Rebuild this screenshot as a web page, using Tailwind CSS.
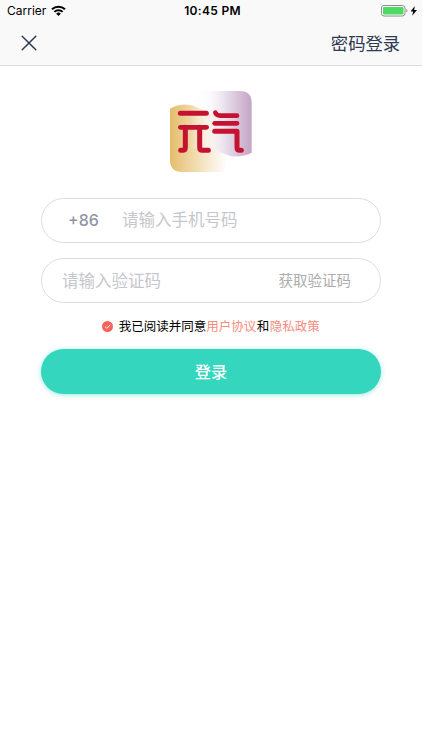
<!DOCTYPE html>
<html lang="zh-CN">
<head>
  <meta charset="UTF-8" />
  <meta name="viewport" content="width=device-width, initial-scale=1" />
  <title>登录</title>
  <script src="https://cdn.jsdelivr.net/npm/@tailwindcss/browser@4"></script>
</head>
<body class="bg-white h-screen overflow-hidden font-['Inter','Noto_Sans_CJK_SC',sans-serif]">
  <header class="h-[66px] bg-[#f9f9f9] border-b border-[#dcdcdc]">
    <!-- status bar -->
    <div class="h-[22px] grid grid-cols-3 items-center pl-[7px] pr-1 text-black">
      <div class="flex items-center gap-[5px] text-[12px] leading-none">
        <span>Carrier</span>
        <svg class="w-[15px] h-[11px] -mt-px" viewBox="0 0 15 11" fill="none" stroke="#000" stroke-width="2">
          <path d="M1 4.3a9.3 9.3 0 0 1 13 0" />
          <path d="M3.4 6.9a5.9 5.9 0 0 1 8.2 0" />
          <path d="M7.5 11L5.2 8.7a3.3 3.3 0 0 1 4.6 0z" fill="#000" stroke="none" />
        </svg>
      </div>
      <span class="text-center text-[12px] leading-none font-semibold tracking-[0.3px]">10:45 PM</span>
      <div class="flex items-center justify-end">
        <svg class="w-[37px] h-[12px]" viewBox="0 0 37 12">
          <rect x=".5" y=".5" width="23.5" height="10.5" rx="2.6" fill="#fff" stroke="#8d8d8d" />
          <rect x="2" y="2" width="20.5" height="7.5" rx="1.2" fill="#4cd964" />
          <path d="M25.3 4v3.6q1.2-.6 1.2-1.8t-1.2-1.8z" fill="#8d8d8d" />
          <path d="M33.8 1L29.6 6.4h2.6L31.2 10.8l4.8-5.9h-2.8z" fill="#000" />
        </svg>
      </div>
    </div>
    <!-- nav bar -->
    <div class="h-[43px] flex items-center justify-between pl-[21px] pr-[22px] text-[#2d3a52]">
      <svg class="w-4 h-4 -mt-[2px]" viewBox="0 0 16 16" fill="none" stroke="currentColor" stroke-width="1.5" stroke-linecap="round">
        <path d="M1.2 1.2l13.6 13.6M14.8 1.2L1.2 14.8" />
      </svg>
      <a class="text-[17.3px] leading-none">密码登录</a>
    </div>
  </header>

  <main class="px-[41px] pt-[18px]">
    <svg class="block mx-auto w-[102px] h-[96px]" viewBox="0 0 306 288">
      <defs>
        <linearGradient id="gold" x1="0" x2="1">
          <stop offset="0" stop-color="#e5bd6c" />
          <stop offset=".45" stop-color="#f1dcb0" />
          <stop offset="1" stop-color="#fff" />
        </linearGradient>
        <linearGradient id="plum" x1="0" x2="1">
          <stop offset="0" stop-color="#fff" stop-opacity="0" />
          <stop offset=".3" stop-color="#fbf8fb" stop-opacity=".6" />
          <stop offset=".6" stop-color="#e6dbe9" />
          <stop offset="1" stop-color="#c5a3c4" />
        </linearGradient>
      </defs>
      <path d="M30 74Q75 50 118 72Q155 92 200 88V264H66Q30 264 30 228z" fill="url(#gold)" />
      <path d="M90 21H240Q275 21 275 57V206Q230 228 186 207Q140 188 90 198z" fill="url(#plum)" />
      <g fill="none" stroke="#c41230" stroke-linecap="round" stroke-linejoin="round">
        <path d="M61 88H139" stroke-width="15" />
        <path d="M61 130H140" stroke-width="14" />
        <path d="M166 86Q170 95 180 95H231" stroke-width="14" />
        <path d="M164 118H231" stroke-width="14" />
        <path d="M76 130V190Q76 199 68 199H62" stroke-width="15" />
        <path d="M119 130V190Q119 199 127 199H145" stroke-width="15" />
        <path d="M164 142H231V190Q231 199 239 199H244" stroke-width="15" />
      </g>
    </svg>

    <div class="mt-[18px] h-[45px] flex items-center rounded-full border border-[#dedede] pl-[26px]">
      <span class="text-[16px] leading-none font-medium text-[#9095a5] w-[54px] -mt-px">+86</span>
      <span class="text-[16.5px] leading-none text-[#c6c7cc]">请输入手机号码</span>
    </div>

    <div class="mt-[15px] h-[45px] flex items-center justify-between rounded-full border border-[#dedede] pl-[20px] pr-[29px]">
      <span class="text-[16.5px] leading-none text-[#c6c7cc] pt-px">请输入验证码</span>
      <span class="text-[14.5px] leading-none text-[#acacac] pt-[2px]">获取验证码</span>
    </div>

    <div class="mt-[15px] h-[17px] flex items-center justify-center text-[12.5px] leading-none text-black whitespace-nowrap">
      <svg class="w-[11px] h-[11px] mr-[5.5px]" viewBox="0 0 11 11">
        <circle cx="5.5" cy="5.5" r="5.5" fill="#f9625c" />
        <path d="M3 5.6l1.9 1.8 3.3-3.6" fill="none" stroke="#fff" />
      </svg>
      <span class="pt-[2px]">我已阅读并同意</span><a class="text-[#f78b7e] pt-[2px]">用户协议</a><span class="pt-[2px] px-[0.5px]">和</span><a class="text-[#f78b7e] pt-[2px]">隐私政策</a>
    </div>

    <button class="mt-[14px] w-full h-[45px] rounded-full bg-[#34d6be] text-white text-[16.2px] leading-none font-medium pt-px shadow-[0_1px_5px_rgba(52,214,190,0.5)]">登录</button>
  </main>
</body>
</html>
